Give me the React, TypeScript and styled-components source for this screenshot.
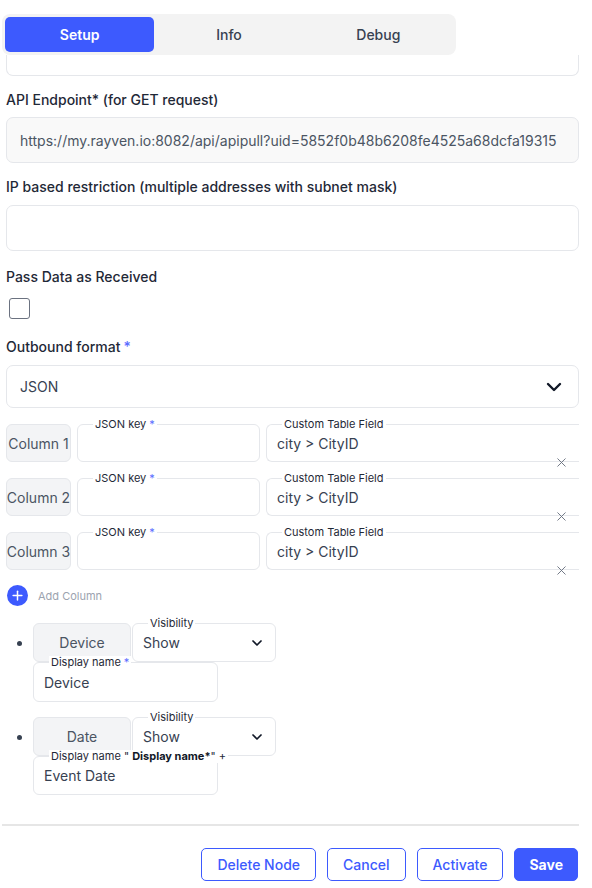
import React from "react";
import styled, { createGlobalStyle } from "styled-components";
import { ChevronDown, X, Plus } from "lucide-react";

const GlobalStyle = createGlobalStyle`
  * { box-sizing: border-box; }
  body {
    margin: 0;
    background: #ffffff;
    font-family: Inter, "Noto Sans", Arial, sans-serif;
    color: #1f2937;
  }
`;

const Page = styled.div`
  width: 592px;
  padding: 14px 13px 8px 6px;
`;

const TabBar = styled.div`
  display: flex;
  width: 454px;
  height: 41px;
  margin-left: -4px;
  padding: 3px;
  background: #f3f3f3;
  border-radius: 8px;
`;

const Tab = styled.div<{ $active?: boolean }>`
  flex: 1;
  display: flex;
  align-items: center;
  justify-content: center;
  border-radius: 5px;
  font-size: 14px;
  font-weight: ${(p) => (p.$active ? 600 : 500)};
  color: ${(p) => (p.$active ? "#ffffff" : "#374151")};
  background: ${(p) => (p.$active ? "#3d5afe" : "transparent")};
`;

const CutField = styled.div`
  height: 21px;
  border: 1px solid #e5e7eb;
  border-top: none;
  border-radius: 0 0 7px 7px;
`;

const Label = styled.div<{ $top: number }>`
  margin-top: ${(p) => p.$top}px;
  font-size: 14px;
  line-height: 20px;
  font-weight: 500;
  color: #1f2937;
`;

const Req = styled.span`
  color: #5b6cff;
  margin-left: 3px;
`;

const TextBox = styled.div<{ $disabled?: boolean; $top: number }>`
  margin-top: ${(p) => p.$top}px;
  height: 46px;
  display: flex;
  align-items: center;
  padding: 0 13px;
  border: 1px solid #e5e7eb;
  border-radius: 7px;
  background: ${(p) => (p.$disabled ? "#f9f9f9" : "#ffffff")};
  font-size: 14px;
  color: #4b5563;
  white-space: nowrap;
  overflow: hidden;
`;

const Check = styled.div`
  margin: 11px 0 0 3px;
  width: 21px;
  height: 21px;
  border: 1.5px solid #6b7280;
  border-radius: 3px;
`;

const Select = styled.div`
  margin-top: 8px;
  height: 43px;
  display: flex;
  align-items: center;
  justify-content: space-between;
  padding: 0 12px 0 13px;
  border: 1px solid #e5e7eb;
  border-radius: 7px;
  font-size: 14px;
  color: #374151;
`;

const Rows = styled.div`
  margin-top: 16px;
  display: flex;
  flex-direction: column;
  gap: 16px;
`;

const Row = styled.div`
  display: flex;
  gap: 6px;
  height: 38px;
`;

const NameBox = styled.div<{ $w: number; $h: number }>`
  width: ${(p) => p.$w}px;
  height: ${(p) => p.$h}px;
  flex-shrink: 0;
  display: flex;
  align-items: center;
  justify-content: center;
  background: #f3f4f6;
  border: 1px solid #e5e7eb;
  border-radius: 6px;
  font-size: 14px;
  color: #4b5563;
  white-space: nowrap;
`;

const Field = styled.div<{ $w?: number; $h: number; $open?: boolean }>`
  position: relative;
  ${(p) => (p.$w ? `width: ${p.$w}px; flex-shrink: 0;` : "flex: 1;")}
  height: ${(p) => p.$h}px;
  display: flex;
  align-items: center;
  padding: 0 10px 0 10px;
  border: 1px solid #e5e7eb;
  border-radius: ${(p) => (p.$open ? "6px 0 0 6px" : "6px")};
  ${(p) => (p.$open ? "border-right: none;" : "")}
  background: #ffffff;
  font-size: 14px;
  color: #374151;
`;

const Legend = styled.span<{ $left: number }>`
  position: absolute;
  top: -7px;
  left: ${(p) => p.$left}px;
  padding: 0 2px;
  background: #ffffff;
  font-size: 11px;
  line-height: 13px;
  font-weight: 400;
  color: #1f2937;
  white-space: nowrap;
`;

const Clear = styled.span`
  position: absolute;
  right: 10px;
  bottom: -9px;
  color: #6b7280;
  display: flex;
`;

const AddRow = styled.div`
  margin-top: 15px;
  display: flex;
  align-items: center;
  gap: 10px;
  padding-left: 1px;
`;

const AddCircle = styled.div`
  width: 21px;
  height: 21px;
  border-radius: 50%;
  background: #3d5afe;
  color: #ffffff;
  display: flex;
  align-items: center;
  justify-content: center;
`;

const AddText = styled.span`
  font-size: 11px;
  color: #9ca3af;
`;

const List = styled.ul`
  margin: 17px 0 0;
  padding-left: 27px;
  display: flex;
  flex-direction: column;
  gap: 15px;
  font-size: 14px;
  color: #374151;
`;

const ItemTop = styled.div`
  display: flex;
  gap: 1px;
`;

const Bold = styled.b`
  font-weight: 700;
  color: #111827;
`;

const Divider = styled.hr`
  margin: 29px 0 0 -4px;
  border: none;
  height: 2px;
  background: #e6e6e6;
`;

const Footer = styled.div`
  margin-top: 22px;
  display: flex;
  justify-content: flex-end;
  gap: 11px;
  padding-right: 1px;
`;

const Button = styled.button<{ $primary?: boolean }>`
  height: 33px;
  padding: 0 ${(p) => (p.$primary ? 14 : 15)}px;
  border: 1px solid #3d5afe;
  border-radius: 5px;
  background: ${(p) => (p.$primary ? "#3d5afe" : "#ffffff")};
  color: ${(p) => (p.$primary ? "#ffffff" : "#3d5afe")};
  font-family: inherit;
  font-size: 14px;
  font-weight: ${(p) => (p.$primary ? 700 : 500)};
`;

const columns = ["Column 1", "Column 2", "Column 3"];

export default function App() {
  return (
    <Page>
      <GlobalStyle />
      <TabBar>
        <Tab $active>Setup</Tab>
        <Tab>Info</Tab>
        <Tab>Debug</Tab>
      </TabBar>
      <CutField />

      <Label $top={14}>API Endpoint* (for GET request)</Label>
      <TextBox $disabled $top={7}>
        https://my.rayven.io:8082/api/apipull?uid=5852f0b48b6208fe4525a68dcfa19315
      </TextBox>

      <Label $top={14}>IP based restriction (multiple addresses with subnet mask)</Label>
      <TextBox $top={8} />

      <Label $top={16}>Pass Data as Received</Label>
      <Check />

      <Label $top={18}>
        Outbound format<Req>*</Req>
      </Label>
      <Select>
        JSON
        <ChevronDown size={24} strokeWidth={2.4} color="#111827" />
      </Select>

      <Rows>
        {columns.map((c) => (
          <Row key={c}>
            <NameBox $w={65} $h={38}>{c}</NameBox>
            <Field $w={183} $h={38}>
              <Legend $left={15}>
                JSON key<Req>*</Req>
              </Legend>
            </Field>
            <Field $h={38} $open>
              <Legend $left={15}>Custom Table Field</Legend>
              city &gt; CityID
              <Clear>
                <X size={15} strokeWidth={1.5} />
              </Clear>
            </Field>
          </Row>
        ))}
      </Rows>

      <AddRow>
        <AddCircle>
          <Plus size={15} strokeWidth={2.4} />
        </AddCircle>
        <AddText>Add Column</AddText>
      </AddRow>

      <List>
        <li>
          <ItemTop>
            <NameBox $w={98} $h={39}>Device</NameBox>
            <Field $w={144} $h={39}>
              <Legend $left={15}>Visibility</Legend>
              <span style={{ flex: 1 }}>Show</span>
              <ChevronDown size={16} strokeWidth={2.6} color="#111827" />
            </Field>
          </ItemTop>
          <Field $w={185} $h={40}>
            <Legend $left={15}>
              Display name<Req>*</Req>
            </Legend>
            Device
          </Field>
        </li>
        <li>
          <ItemTop>
            <NameBox $w={98} $h={39}>Date</NameBox>
            <Field $w={144} $h={39}>
              <Legend $left={15}>Visibility</Legend>
              <span style={{ flex: 1 }}>Show</span>
              <ChevronDown size={16} strokeWidth={2.6} color="#111827" />
            </Field>
          </ItemTop>
          <Field $w={185} $h={39}>
            <Legend $left={15}>
              Display name " <Bold>Display name*</Bold>" +
            </Legend>
            Event Date
          </Field>
        </li>
      </List>

      <Divider />
      <Footer>
        <Button>Delete Node</Button>
        <Button>Cancel</Button>
        <Button>Activate</Button>
        <Button $primary>Save</Button>
      </Footer>
    </Page>
  );
}
